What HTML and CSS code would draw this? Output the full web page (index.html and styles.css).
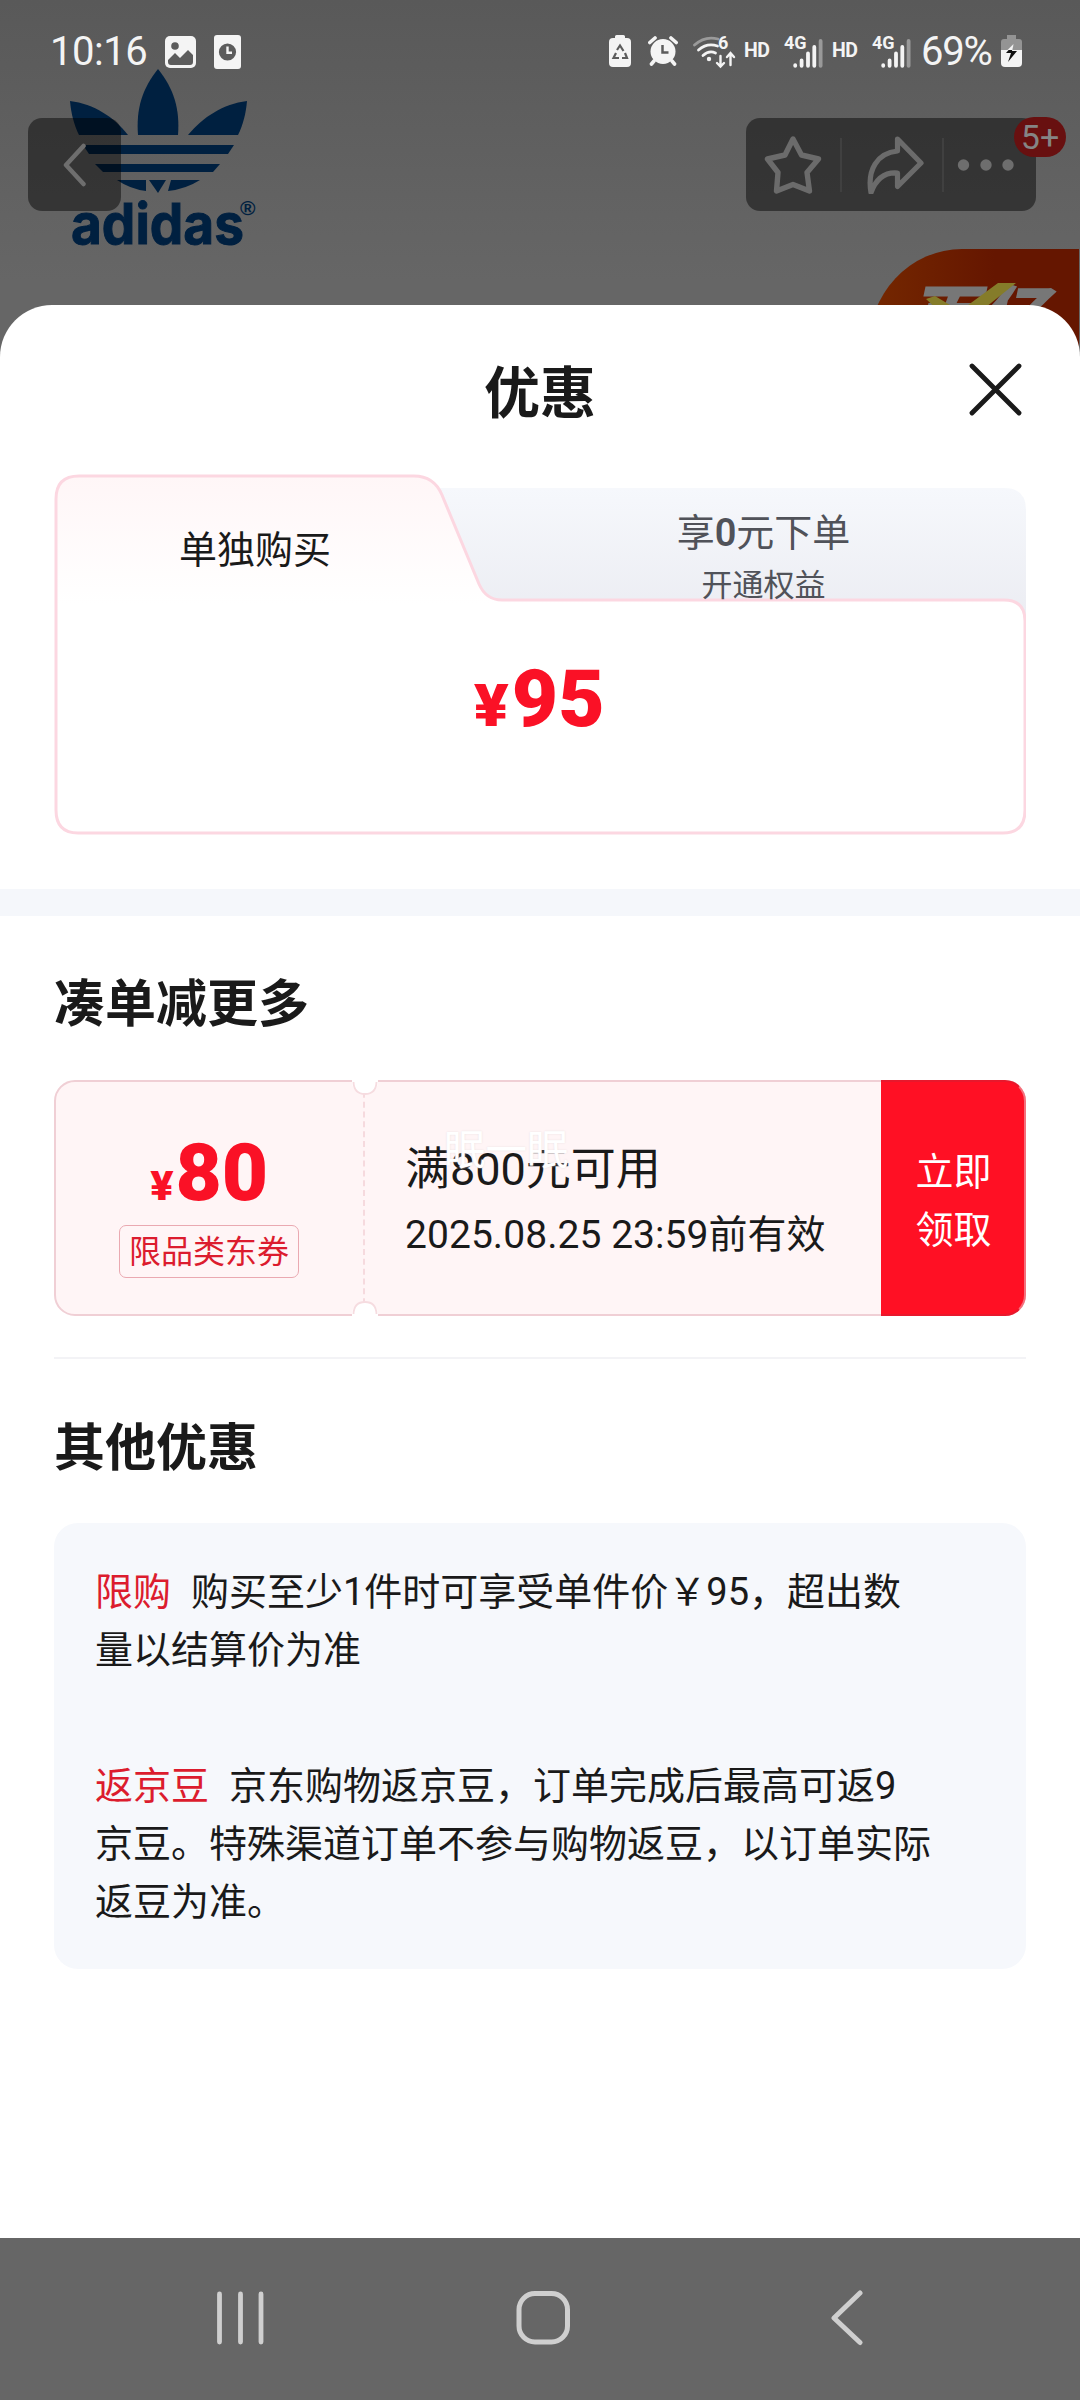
FILE: index.html
```html
<!DOCTYPE html>
<html lang="zh-CN">
<head>
<meta charset="utf-8">
<title>优惠</title>
<link rel="stylesheet" href="styles.css">
</head>
<body>
<div class="screen">
  <svg class="brand" width="220" height="210" viewBox="0 0 220 210">
    <g fill="#002040">
      <path d="M98 8C82 28 76 48 78 74H118C120 48 114 28 98 8Z"/>
      <path d="M10 40C34 43 54 56 68 74H19C14 64 11 52 10 40Z"/>
      <path d="M187 40C163 43 143 56 128 74H178C183 64 186 52 187 40Z"/>
      <path d="M23 84H174L168 93H29Z"/>
      <path d="M35 103H160L153 111H43Z"/>
      <path d="M57 119H86V130Q70 128 57 119Z"/>
      <path d="M140 119H111L108 130Q126 128 140 119Z"/>
      <path d="M89 119H106L98 132Z"/>
    </g>
    <text class="brand-name" x="11" y="183" textLength="173" lengthAdjust="spacingAndGlyphs">adidas</text>
    <text class="brand-mark" x="180" y="154">®</text>
  </svg>

  <div class="promo">
    <span class="promo-text">百亿</span>
    <svg class="promo-check" width="100" height="40" viewBox="0 0 100 40"><path d="M0 16L9 13L34 28L72 0H90L40 40H26Z" fill="#857c2a"/></svg>
  </div>

  <header class="status">
    <div class="status-left">
      <span class="clock">10:16</span>
      <svg class="ic-photo" width="31" height="32" viewBox="0 0 31 32"><rect width="31" height="32" rx="5" fill="#f4f4f4"/><circle cx="10" cy="10" r="3.8" fill="#5c5c5c"/><path d="M3 24L10 17L15 22L23 14L28 19V26Q28 29 25 29H6Q3 29 3 26Z" fill="#5c5c5c"/></svg>
      <svg class="ic-file" width="27" height="34" viewBox="0 0 27 34"><rect width="27" height="34" rx="3" fill="#f4f4f4"/><circle cx="13.5" cy="17" r="8.6" fill="#5c5c5c"/><path d="M13.5 11.5V17.8H18" fill="none" stroke="#f4f4f4" stroke-width="2.4"/></svg>
    </div>
    <div class="status-right">
      <svg class="ic-eco" width="22" height="32" viewBox="0 0 22 32"><path d="M6 3V1.500Q6 0 7.500 0H14.500Q16 0 16 1.500V3H18Q22 3 22 7V28Q22 32 18 32H4Q0 32 0 28V7Q0 3 4 3Z" fill="#f4f4f4"/><path d="M8 15L11 10.500L14.500 16M16 18L18 23H13M10 23H4.500L7 18" fill="none" stroke="#5c5c5c" stroke-width="2.200"/></svg>
      <svg class="ic-alarm" width="30" height="32" viewBox="0 0 30 32"><circle cx="15" cy="16.500" r="12.500" fill="#f4f4f4"/><path d="M1.800 7.500L7 3M28.200 7.500L23 3M6 26L3.500 29M24 26L26.500 29" stroke="#f4f4f4" stroke-width="3.600" stroke-linecap="round"/><path d="M14.500 10V17.500H20.500" fill="none" stroke="#5c5c5c" stroke-width="2.500"/></svg>
      <svg class="ic-wifi" width="44" height="34" viewBox="0 0 44 34"><g fill="none" stroke-linecap="round" stroke-width="2.800"><path d="M2.500 10Q13 .5 26 4" stroke="#9a9a9a"/><path d="M6.500 15Q15 7.500 25.500 11M11 20.500Q17 15 23.500 18" stroke="#f4f4f4"/><path d="M28.500 21V31M25 28L28.500 31.500L32 28M38.500 30V18.500M35 22L38.500 18L42 22" stroke="#f4f4f4" stroke-width="2.400"/></g><circle cx="17" cy="24" r="2.200" fill="#f4f4f4"/><text class="tiny" x="26" y="14">6</text></svg>
      <span class="hd">HD</span>
      <svg class="ic-signal" width="41" height="34" viewBox="-2 0 41 34"><text class="tiny" x="0" y="14">4G</text><g stroke="#f4f4f4" stroke-width="3.800" stroke-linecap="round"><path d="M11.200 30.200V30.800M17.600 25.500V30.800M24 18.500V30.800M30.300 12V30.800"/><path d="M36.600 6V30.800" stroke="#999"/></g></svg>
      <span class="hd hd-second">HD</span>
      <svg class="ic-signal" width="41" height="34" viewBox="-2 0 41 34"><text class="tiny" x="0" y="14">4G</text><g stroke="#f4f4f4" stroke-width="3.800" stroke-linecap="round"><path d="M11.200 30.200V30.800M17.600 25.500V30.800M24 18.500V30.800M30.300 12V30.800"/><path d="M36.600 6V30.800" stroke="#999"/></g></svg>
      <span class="percent">69%</span>
      <svg class="ic-battery" width="21" height="32" viewBox="0 0 21 32"><path d="M6 4V0H15V4H18Q21 4 21 7V16H0V7Q0 4 3 4Z" fill="#949494"/><path d="M0 15H21V28Q21 32 17 32H4Q0 32 0 28Z" fill="#f4f4f4"/><path d="M12 10L5 18H10L7 27L16 16H11Z" fill="#111"/><path d="M12.500 9L6.500 15H11.500Z" fill="#f4f4f4"/></svg>
    </div>
  </header>

  <nav class="toolbar">
    <div class="tool-back"><svg width="24" height="44" viewBox="0 0 24 44"><path d="M20.500 3L3 22L20.500 41" fill="none" stroke="#6e6e6e" stroke-width="4.500" stroke-linecap="round" stroke-linejoin="round"/></svg></div>
    <div class="tool-group">
      <svg class="star" width="58" height="60" viewBox="0 0 58 60"><path d="M29 4L37.500 20L54.500 24L43 37.500L45.500 56L29 49.500L12.500 56L14 37.500L3.500 24L21 20Z" fill="none" stroke="#6b6b6b" stroke-width="5.400" stroke-linejoin="round"/></svg>
      <i class="rule"></i>
      <svg class="share" width="58" height="58" viewBox="0 0 58 58"><path d="M31.500 3L55 27L31.500 50.500V37C19 36 10 43 5 56.500C1 34 11 17 31.500 15Z" fill="none" stroke="#6b6b6b" stroke-width="5.200" stroke-linejoin="round"/></svg>
      <i class="rule"></i>
      <svg class="dots" width="58" height="12" viewBox="0 0 58 12" fill="#6e6e6e"><circle cx="6.500" cy="6" r="5.700"/><circle cx="29" cy="6" r="5.700"/><circle cx="51" cy="6" r="5.700"/></svg>
      <span class="badge">5+</span>
    </div>
  </nav>

  <main class="sheet">
    <div class="sheet-head">
      <h1>优惠</h1>
      <svg class="close" width="54" height="54" viewBox="0 0 54 54"><path d="M3 3L50 50M50 3L3 50" stroke="#1a1a1a" stroke-width="4.800" stroke-linecap="round"/></svg>
    </div>

    <section class="plans">
      <svg class="plans-frame" width="972" height="362" viewBox="0 0 972 362">
        <defs>
          <linearGradient id="rose" x1="0" y1="0" x2="0" y2="1"><stop offset="0" stop-color="#fff6f7"/><stop offset=".36" stop-color="#fff"/></linearGradient>
          <linearGradient id="mist" x1="0" y1="0" x2="0" y2="1"><stop offset="0" stop-color="#f6f8fc"/><stop offset="1" stop-color="#ebecf2"/></linearGradient>
        </defs>
        <path d="M370 14H950Q972 14 972 36V150H370Z" fill="url(#mist)"/>
        <path d="M2 25Q2 2 25 2H360Q380 2 388 21L425 110Q432 126 448 126H950Q971 126 971 147V336Q971 359 949 359H24Q2 359 2 336Z" fill="url(#rose)" stroke="#fcd7e1" stroke-width="3"/>
      </svg>
      <div class="tabs">
        <div class="tab-main">单独购买</div>
        <div class="tab-alt"><div class="tab-title">享<b>0</b>元下单</div><div class="tab-sub">开通权益</div></div>
      </div>
      <div class="price"><span class="yen">¥</span>95</div>
    </section>

    <div class="band"></div>

    <section class="more">
      <h2>凑单减更多</h2>
      <div class="coupon">
        <div class="coupon-value">
          <div class="amount"><span class="yen">¥</span>80</div>
          <div class="tag">限品类东券</div>
        </div>
        <div class="coupon-info">
          <div class="cond">满800元可用</div>
          <div class="valid">2025.08.25 23:59前有效</div>
          <span class="ghost">眠一眠</span>
        </div>
        <div class="claim">立即<br>领取</div>
        <svg class="notch notch-top" width="30" height="16" viewBox="0 0 30 16"><path d="M2 0V2Q3 14 15 14Q27 14 28 2V0Z" fill="#fff"/><path d="M3.500 2Q4 14 15 14Q26 14 26.500 2" fill="none" stroke="#f6dce0" stroke-width="1.800"/></svg>
        <svg class="notch notch-bottom" width="30" height="16" viewBox="0 0 30 16"><path d="M2 0V2Q3 14 15 14Q27 14 28 2V0Z" fill="#fff"/><path d="M3.500 2Q4 14 15 14Q26 14 26.500 2" fill="none" stroke="#f6dce0" stroke-width="1.800"/></svg>
      </div>
    </section>

    <section class="other">
      <h2>其他优惠</h2>
      <div class="notes">
        <p><em>限购</em>购买至少1件时可享受单件价￥95，超出数<br>量以结算价为准</p>
        <p><em>返京豆</em>京东购物返京豆，订单完成后最高可返9<br>京豆。特殊渠道订单不参与购物返豆，以订单实际<br>返豆为准。</p>
      </div>
    </section>
  </main>

  <footer class="navbar">
    <svg width="48" height="56" viewBox="0 0 48 56"><path d="M3.500 4V52M24.500 4V52M45 4V52" stroke="#cfcfcf" stroke-width="4.800" stroke-linecap="round"/></svg>
    <svg class="nav-home" width="54" height="56" viewBox="0 0 54 56"><rect x="3" y="3.500" width="48.500" height="48.500" rx="16" fill="none" stroke="#cfcfcf" stroke-width="5"/></svg>
    <svg width="34" height="56" viewBox="0 0 34 56"><path d="M30 3L4 28L30 52.500" fill="none" stroke="#cfcfcf" stroke-width="5" stroke-linecap="round" stroke-linejoin="round"/></svg>
  </footer>
</div>
</body>
</html>
```
FILE: styles.css
```css
* { box-sizing: border-box; }

body {
  margin: 0;
  font-family: Roboto, "Noto Sans CJK SC", sans-serif;
  color: #1a1a1a;
}

h1, h2, p { margin: 0; }

.screen {
  position: relative;
  width: 1080px;
  height: 2400px;
  display: flex;
  flex-direction: column;
  overflow: hidden;
  background: linear-gradient(#595959 0, #666 280px);
}

/* Product image, dimmed behind the sheet */
.brand { position: absolute; left: 60px; top: 61px; }
.brand-name { font: 700 56px Inter, sans-serif; fill: #002040; stroke: #002040; stroke-width: 1; }
.brand-mark { font: 700 21px "Liberation Sans", sans-serif; fill: #002040; }

.promo {
  position: absolute;
  left: 868px;
  top: 249px;
  width: 211px;
  height: 140px;
  border-top-left-radius: 94px 100px;
  background: linear-gradient(90deg, #752800, #651600 60%);
}
.promo-text {
  position: absolute;
  left: 48px;
  top: 30px;
  font: 900 70px/68px "Noto Sans CJK SC", sans-serif;
  color: #777;
  transform: skewX(-12deg);
}
.promo-check { position: absolute; left: 58px; top: 34px; }

/* Status bar */
.status {
  position: relative;
  height: 103px;
  padding: 35px 58px 0 50px;
  display: flex;
  justify-content: space-between;
  align-items: flex-start;
  color: #f4f4f4;
}
.status-left, .status-right { display: flex; align-items: flex-start; }
.clock { width: 115px; margin-top: -6px; font-size: 40px; line-height: 46px; letter-spacing: -.5px; }
.ic-photo { margin-top: 1px; }
.ic-file { margin-left: 18px; }
.ic-alarm { margin-left: 17px; }
.ic-wifi { margin-left: 14px; }
.hd { width: 30px; margin-left: 8px; font-size: 19.5px; font-weight: 700; line-height: 32px; letter-spacing: -.5px; }
.hd-second { margin-left: 9px; }
.ic-signal { margin-left: 8px; }
.percent { width: 76px; margin: -6px 0 0 10px; font-size: 40px; line-height: 46px; letter-spacing: -1.2px; }
.ic-battery { margin-left: 4px; }
.tiny { font: 700 18px Roboto, sans-serif; fill: #f4f4f4; }

/* Floating product toolbar */
.toolbar {
  position: relative;
  margin-top: 15px;
  height: 187px;
  padding: 0 44px 0 28px;
  display: flex;
  justify-content: space-between;
  align-items: flex-start;
}
.tool-back, .tool-group {
  height: 93px;
  border-radius: 14px;
  background: rgba(0, 0, 0, .46);
  display: flex;
  align-items: center;
}
.tool-back { width: 93px; justify-content: center; }
.tool-group { position: relative; width: 290px; padding-left: 18px; }
.rule { width: 2px; height: 54px; background: #404040; margin-left: 18px; }
.share { margin-left: 24px; }
.dots { margin-left: 13px; }
.badge {
  position: absolute;
  left: 268px;
  top: -1px;
  width: 52px;
  height: 40px;
  border-radius: 20px;
  background: #681010;
  color: #858585;
  font-size: 34px;
  line-height: 41px;
  text-align: center;
}

/* Sheet */
.sheet {
  position: relative;
  height: 1933px;
  border-radius: 52px 52px 0 0;
  background: #fff;
}
.sheet-head { height: 169px; padding-top: 49px; position: relative; text-align: center; }
.sheet-head h1 { font-size: 56px; line-height: 80px; font-weight: 700; }
.close { position: absolute; right: 57px; top: 58px; }

.plans { position: relative; margin: 0 54px; height: 415px; }
.plans-frame { position: absolute; left: 0; top: 0; }
.tabs { position: relative; display: flex; height: 126px; overflow: hidden; }
.tab-main { width: 402px; font-size: 38px; line-height: 153px; text-align: center; }
.tab-alt { flex: 1; padding: 33px 0 0 45px; text-align: center; color: #505259; }
.tab-title { font-size: 38px; line-height: 52px; }
.tab-title b { font-weight: 600; }
.tab-sub { font-size: 31px; line-height: 54px; }
.price {
  position: relative;
  margin-top: 57px;
  text-align: center;
  font-size: 80px;
  line-height: 84px;
  font-weight: 900;
  color: #fa1126;
}
.yen { display: inline-block; line-height: 1; transform: scaleX(1.08); }
.price .yen { font-size: 60px; margin-right: 4px; }

.band { height: 27px; background: #f5f7fb; }

h2 { font-size: 51px; line-height: 74px; font-weight: 700; }

.more { margin: 0 54px; padding-top: 52px; height: 443px; border-bottom: 2px solid #f3f3f6; }
.coupon {
  position: relative;
  margin-top: 38px;
  height: 236px;
  display: flex;
  border: 2px solid #f0cfd5;
  border-radius: 21px;
  background: #fff5f6;
}
.coupon-value {
  width: 309px;
  padding-top: 49px;
  display: flex;
  flex-direction: column;
  align-items: center;
  border-right: 2px dashed #f6dade;
}
.amount { height: 84px; font-size: 80px; line-height: 84px; font-weight: 900; color: #fa1126; }
.amount .yen { font-size: 40px; margin-right: 3px; }
.tag {
  margin: 10px 1px 0 0;
  width: 180px;
  height: 53px;
  border: 1px solid #eaa9b1;
  border-radius: 7px;
  font-size: 32px;
  line-height: 52px;
  text-align: center;
  color: #dc1c2e;
}
.coupon-info { position: relative; flex: 1; padding: 56px 0 0 40px; }
.cond { font-size: 45px; line-height: 64px; }
.valid { font-size: 39px; line-height: 66px; white-space: nowrap; letter-spacing: .05px; }
.ghost {
  position: absolute;
  left: 79px;
  top: 39px;
  font-size: 41.5px;
  line-height: 60px;
  color: #fff;
  text-shadow: 0 0 2px #e6dfe0;
}
.claim {
  width: 145px;
  margin: -2px -2px -2px 0;
  padding: 61px 0 0 2px;
  border: 2px solid #f5707c;
  border-left: 0;
  border-top-color: #e8182c;
  border-bottom-color: #e8182c;
  border-radius: 0 21px 21px 0;
  background: #ff1024;
  color: #fff;
  font-size: 38px;
  line-height: 58px;
  text-align: center;
}
.notch { position: absolute; left: 294px; }
.notch-top { top: -2px; }
.notch-bottom { bottom: -2px; transform: scaleY(-1); }

.other { margin: 0 54px; padding-top: 53px; }
.notes {
  margin-top: 37px;
  height: 446px;
  padding: 40px 41px 0;
  border-radius: 24px;
  background: #f6f8fc;
  font-size: 38px;
  line-height: 58px;
  white-space: nowrap;
}
.notes p + p { margin-top: 78px; }
.notes em { font-style: normal; color: #dc1c2e; margin-right: 20px; }

/* System navigation */
.navbar {
  height: 162px;
  padding: 0 216px 3px;
  display: flex;
  justify-content: space-between;
  align-items: center;
  background: #666;
}
.nav-home { margin-right: 8px; }
```
